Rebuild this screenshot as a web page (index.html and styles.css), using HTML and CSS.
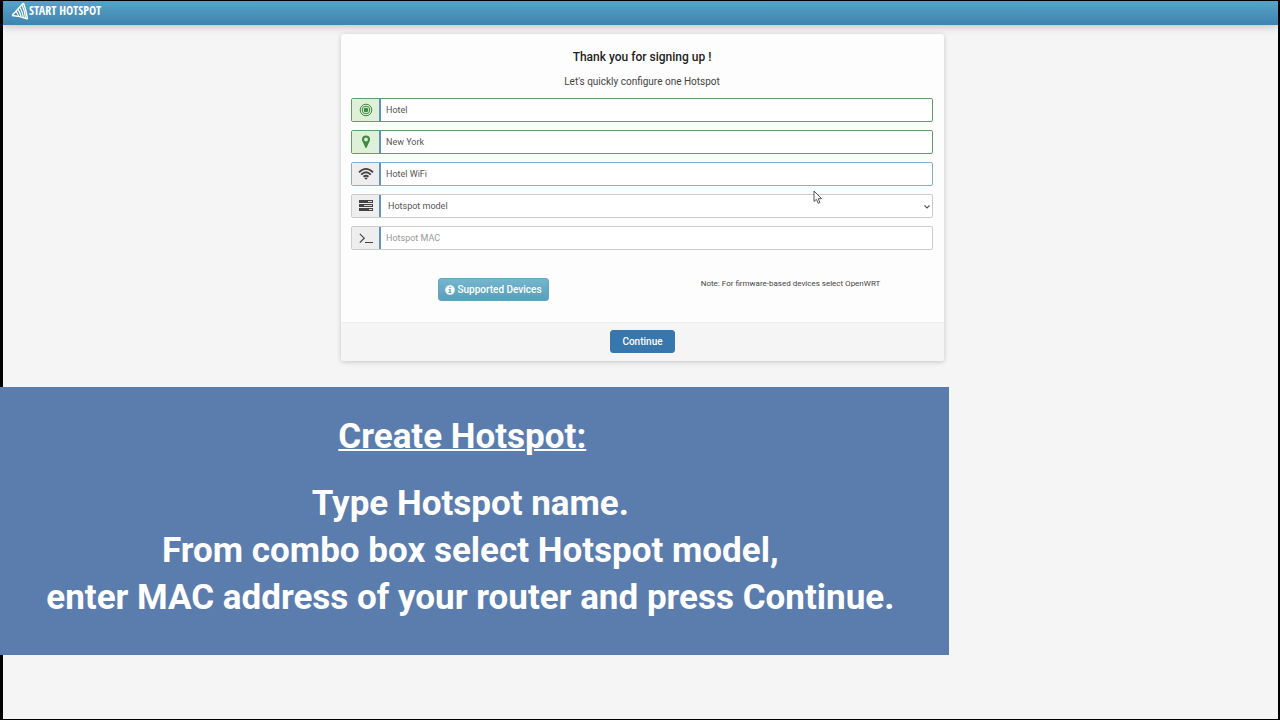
FILE: index.html
```html
<!DOCTYPE html>
<html lang="en">
<head>
<meta charset="utf-8">
<meta name="viewport" content="width=device-width, initial-scale=1">
<title>Start Hotspot</title>
<link rel="stylesheet" href="styles.css">
</head>
<body>
<div class="page">
<header class="topbar">
  <a class="brand" href="#">
    <svg class="brand-mark" viewBox="0 0 18 18" aria-hidden="true">
      <path d="M1 13.5 12.5 1M12.5 1Q15.5 9 16.5 17M1 13.5Q9 14 16.5 17" fill="none" stroke="#fff" stroke-width="1.4"/>
      <path d="M11 3Q14 9 14.5 16M9 5.5Q11.8 10 12.3 15M7 7.6Q9.5 11 10 14.4M5 9.8Q7 11.5 7.5 14" fill="none" stroke="#fff" stroke-width="1.2"/>
    </svg>
    <span class="brand-name">START HOTSPOT</span>
  </a>
</header>
<main class="content">
  <form class="card">
    <div class="card-body">
      <h1 class="title">Thank you for signing up !</h1>
      <p class="subtitle">Let's quickly configure one Hotspot</p>
      <div class="field valid">
        <label class="addon" for="name" aria-label="Hotspot name">
          <svg class="icon" viewBox="0 0 16 16"><g fill="none" stroke="currentColor"><circle cx="8" cy="8" r="5.8"/><circle cx="8" cy="8" r="3.8"/></g><circle cx="8" cy="8" r="2.3" fill="currentColor"/></svg>
        </label>
        <input class="control" id="name" type="text" value="Hotel">
      </div>
      <div class="field valid">
        <label class="addon" for="city" aria-label="Location">
          <svg class="icon" viewBox="0 0 16 16"><path fill="currentColor" fill-rule="evenodd" d="M8 1.5a4 4 0 0 0-4 4c0 1.3.5 2 1 3l2.3 5c.3.7 1.1.7 1.4 0l2.3-5c.5-1 1-1.7 1-3a4 4 0 0 0-4-4zm0 2.1a1.9 1.9 0 1 1 0 3.8 1.9 1.9 0 0 1 0-3.8z"/></svg>
        </label>
        <input class="control" id="city" type="text" value="New York">
      </div>
      <div class="field active">
        <label class="addon" for="ssid" aria-label="WiFi name">
          <svg class="icon" viewBox="0 0 16 16"><g fill="none" stroke="currentColor" stroke-width="1.8"><path d="M1 6.3Q8-.7 15 6.3M3.2 8.6Q8 3.9 12.8 8.6M5.5 10.8Q8 8.6 10.5 10.8"/></g><path d="m8 13.8-1.7-1.7Q8 10.7 9.7 12.1z" fill="currentColor"/></svg>
        </label>
        <input class="control" id="ssid" type="text" value="Hotel WiFi">
      </div>
      <div class="field">
        <label class="addon" for="model" aria-label="Hotspot model">
          <svg class="icon" viewBox="0 0 16 16"><path fill="currentColor" d="M1 2h14v3H1zM1 6h14v3H1zM1 10h14v3H1z"/><path fill="#ddd" d="M10 3h4v1h-4zM6 7h8v1H6zM11 11h3v1h-3z"/></svg>
        </label>
        <span class="select-wrap">
          <select class="control" id="model"><option>Hotspot model</option></select>
          <svg class="chevron" viewBox="0 0 8 6" aria-hidden="true"><path d="m1.5 1.5 2.5 2.5 2.5-2.5" fill="none" stroke="#555" stroke-width="1.1"/></svg>
        </span>
      </div>
      <div class="field">
        <label class="addon" for="mac" aria-label="Hotspot MAC">
          <svg class="icon" viewBox="0 0 16 16"><path d="m1.8 3.8 4.4 4.4-4.4 4.4M7 12.5h8" fill="none" stroke="currentColor" stroke-width="1.2"/></svg>
        </label>
        <input class="control" id="mac" type="text" placeholder="Hotspot MAC">
      </div>
      <div class="extras">
        <div class="extra">
          <button class="btn btn-info" type="button">
            <svg class="info-icon" viewBox="0 0 10 10" aria-hidden="true"><circle cx="5" cy="5" r="4.8" fill="#fff"/><path d="M4.2 1.7h1.5v1.2H4.2zM3.6 4h2.1v3h.7v1H3.6V7h.7V5h-.7z" fill="#5fa8c2"/></svg>
            Supported Devices
          </button>
        </div>
        <p class="extra note">Note: For firmware-based devices select OpenWRT</p>
      </div>
    </div>
    <div class="card-footer">
      <button class="btn btn-primary" type="submit">Continue</button>
    </div>
  </form>
  <svg class="pointer" viewBox="0 0 10 15" aria-hidden="true"><path d="M1 1v10.5l2.4-2.2 1.8 4 1.7-.8-1.7-3.8h3.4z" fill="#fff" stroke="#555" stroke-width="1"/></svg>
</main>
<section class="caption">
  <h2 class="caption-title">Create Hotspot:</h2>
  <p>Type Hotspot name.<br>From combo box select Hotspot model,<br>enter MAC address of your router and press Continue.</p>
</section>
</div>
</body>
</html>
```
FILE: styles.css
```css
* {
  box-sizing: border-box;
}

body {
  margin: 0;
  color: #444;
  font: 10px/16px Roboto, "Liberation Sans", sans-serif;
}

.page {
  min-height: 100vh;
  border: solid #000;
  border-width: 1px 2px 1px 3px;
  background: #f5f5f5;
}

h1, h2, p {
  margin: 0;
}

.topbar {
  height: 24px;
  padding-left: 8px;
  background: linear-gradient(#55a4c8, #3f83b0);
  box-shadow: 0 1px 10px rgba(0, 0, 0, 0.25);
}

.brand {
  display: inline-flex;
  align-items: center;
  height: 20px;
  color: #fff;
  text-decoration: none;
}

.brand-mark {
  width: 18px;
  height: 18px;
}

.brand-name {
  font: bold 12px/20px "Open Sans Condensed", "Liberation Sans Narrow", "Roboto Condensed", "Open Sans", sans-serif;
  white-space: nowrap;
}

.content {
  position: relative;
  padding: 9px 0 26px 4px;
}

.card {
  max-width: 603px;
  margin: 0 auto;
  border-radius: 3px;
  background: #fdfdfd;
  box-shadow: 0 1px 5px rgba(0, 0, 0, 0.2);
}

.card-body {
  padding: 13px 11px 21px 10px;
}

.title {
  color: #222;
  font-size: 12px;
  font-weight: 500;
  line-height: 20px;
  text-align: center;
}

.subtitle {
  margin: 7px 0 8px;
  text-align: center;
}

.field {
  display: flex;
  height: 24px;
  margin-bottom: 8px;
  border: 1px solid #ccc;
  border-radius: 2px;
  background: #fff;
}

.field.valid {
  border-color: #659b68;
}

.field.active {
  border-color: #86afcf;
}

.addon {
  display: flex;
  align-items: center;
  justify-content: center;
  flex: none;
  width: 29px;
  border-right: 2px solid #5f91c2;
  background: #eee;
}

.valid .addon {
  background: #dff0d8;
  color: #3d8b40;
}

.icon {
  width: 16px;
  height: 16px;
}

.control {
  flex: 1;
  width: 100%;
  min-width: 0;
  height: 22px;
  padding: 0 5px;
  border: 0;
  outline: 0;
  background: transparent;
  color: #555;
  font: inherit;
  font-size: 9px;
}

.control::placeholder {
  color: #999;
}

.select-wrap {
  position: relative;
  flex: 1;
}

.select-wrap .control {
  display: block;
  padding: 0 7px;
  appearance: none;
}

.chevron {
  position: absolute;
  top: 9px;
  right: 1px;
  width: 8px;
  height: 6px;
}

.extras {
  display: flex;
  margin-top: 28px;
}

.extra {
  flex: 1;
  text-align: center;
}

.note {
  padding-left: 12px;
  font-size: 8px;
  line-height: 12px;
}

.btn {
  display: inline-flex;
  align-items: center;
  height: 23px;
  border: 1px solid #3a76aa;
  border-radius: 3px;
  color: #fff;
  font: 500 10px/16px Roboto, "Liberation Sans", sans-serif;
}

.btn-info {
  gap: 2px;
  padding: 0 6px;
  border-color: #62a6bf;
  background: linear-gradient(#74b6cc, #599fbb);
}

.info-icon {
  width: 10px;
  height: 10px;
}

.btn-primary {
  padding: 0 11px;
  background: #3876ae;
}

.card-footer {
  display: flex;
  justify-content: center;
  padding: 7px 0 8px;
  border-top: 1px solid #eee;
  border-radius: 0 0 3px 3px;
  background: #f5f5f5;
}

.pointer {
  position: absolute;
  top: 165px;
  left: 810px;
  width: 10px;
  height: 15px;
}

.caption {
  position: relative;
  width: 74.4%;
  margin-left: -3px;
  padding: 26px 8px 34px 0;
  background: #5b7dae;
  color: #fff;
  font-size: 35px;
  font-weight: 700;
  line-height: 47px;
  text-align: center;
}

.caption-title {
  margin: 0 16px 20px 0;
  font-size: 35px;
  text-decoration: underline;
  text-decoration-thickness: 2px;
}
```
